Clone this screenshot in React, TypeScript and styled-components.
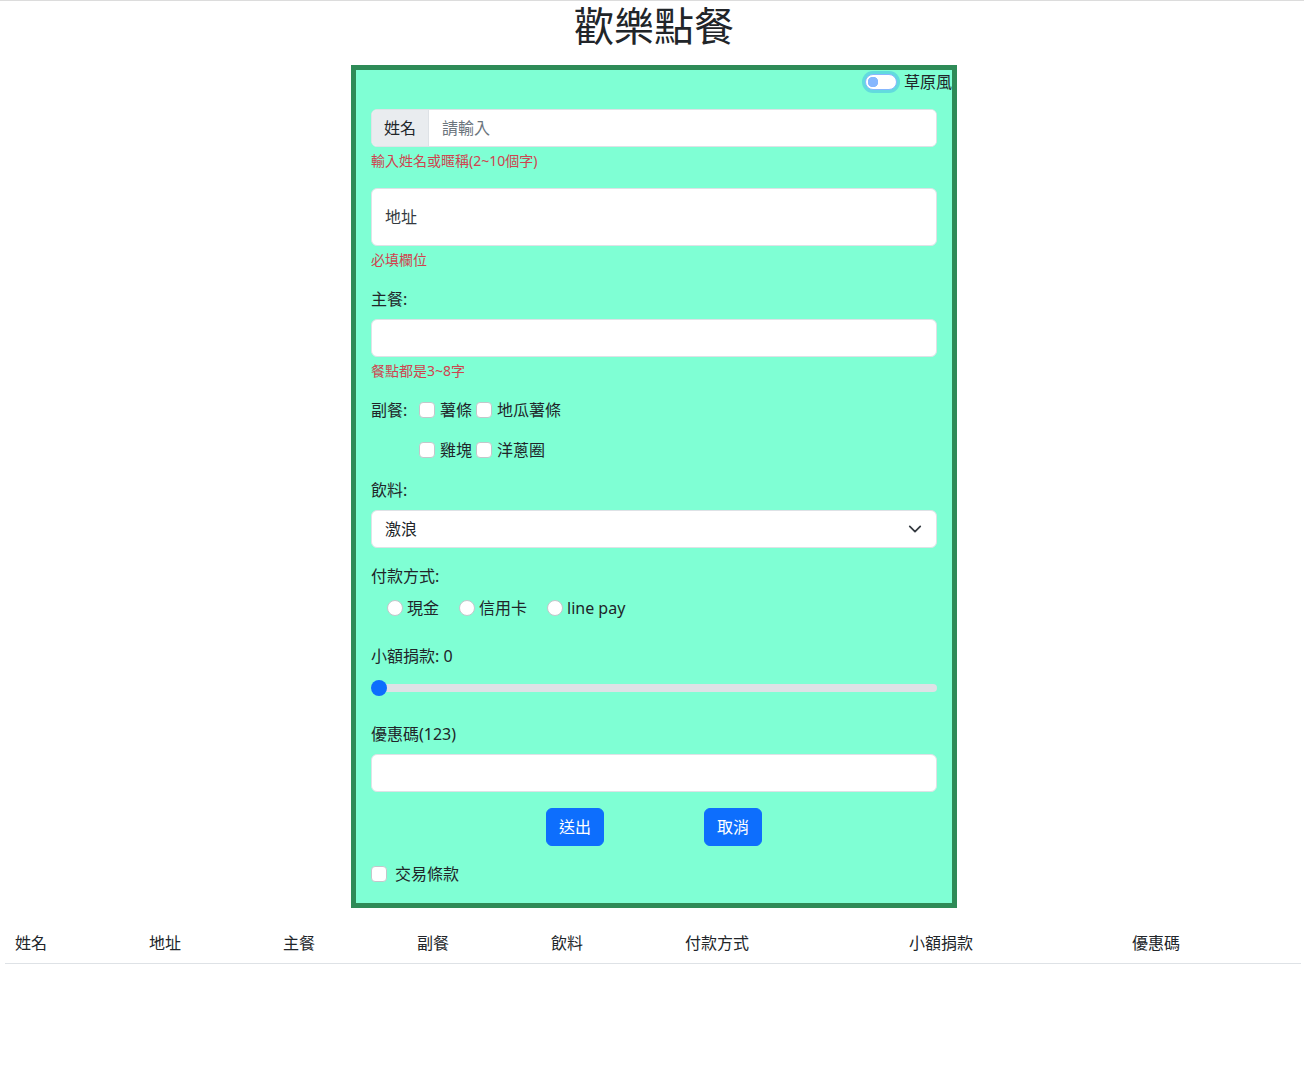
import React from "react";
import styled, { createGlobalStyle } from "styled-components";

const GlobalStyle = createGlobalStyle`
	body {
		margin: 0;
		background: #fff;
		color: #212529;
		font-family: "Noto Sans", "Noto Sans CJK TC", sans-serif;
		font-size: 16px;
		line-height: 24px;
	}
	* {
		box-sizing: border-box;
	}
`;

const sides = ["薯條", "地瓜薯條", "雞塊", "洋蔥圈"];
const payments = ["現金", "信用卡", "line pay"];
const columns = ["姓名", "地址", "主餐", "副餐", "飲料", "付款方式", "小額捐款", "優惠碼"];

const App = () => {
	return (
		<Page>
			<GlobalStyle />
			<TopRule />
			<Main>
				<Title>歡樂點餐</Title>
				<Form>
					<SwitchRow>
						<Switch type="checkbox" />
						<span>草原風</span>
					</SwitchRow>

					<InputGroup $mt={15}>
						<GroupText>姓名</GroupText>
						<GroupInput placeholder="請輸入" />
					</InputGroup>
					<Hint>輸入姓名或暱稱(2~10個字)</Hint>

					<Floating $mt={17}>
						<FloatingLabel>地址</FloatingLabel>
					</Floating>
					<Hint>必填欄位</Hint>

					<Label $mt={17}>主餐:</Label>
					<TextInput $mt={8} />
					<Hint>餐點都是3~8字</Hint>

					<SideBlock>
						<SideLabel>副餐:</SideLabel>
						<SideGrid>
							{sides.map((side) => (
								<CheckItem key={side}>
									<Check type="checkbox" />
									<span>{side}</span>
								</CheckItem>
							))}
						</SideGrid>
					</SideBlock>

					<Label $mt={16}>飲料:</Label>
					<Select>
						<span>激浪</span>
						<svg width="14" height="14" viewBox="0 0 16 16">
							<path
								d="M2 5l6 6 6-6"
								fill="none"
								stroke="#343a40"
								strokeWidth="2"
								strokeLinecap="round"
								strokeLinejoin="round"
							/>
						</svg>
					</Select>

					<Label $mt={16}>付款方式:</Label>
					<RadioRow>
						{payments.map((pay) => (
							<RadioItem key={pay}>
								<Radio type="radio" name="pay" />
								<span>{pay}</span>
							</RadioItem>
						))}
					</RadioRow>

					<Label $mt={24}>小額捐款: 0</Label>
					<Range type="range" min={0} max={100} defaultValue={0} />

					<Label $mt={26}>優惠碼(123)</Label>
					<TextInput $mt={8} />

					<Buttons>
						<Button>送出</Button>
						<Button>取消</Button>
					</Buttons>

					<Terms>
						<Check type="checkbox" />
						<span>交易條款</span>
					</Terms>
				</Form>
			</Main>

			<Table>
				{columns.map((col) => (
					<HeadCell key={col}>{col}</HeadCell>
				))}
			</Table>
		</Page>
	);
};

const Page = styled.div`
	min-height: 1076px;
`;
const TopRule = styled.div`
	height: 1px;
	background: #dcdcdc;
`;
const Main = styled.div`
	padding-left: 4px;
	display: flex;
	flex-direction: column;
	align-items: center;
`;
const Title = styled.h1`
	margin: 1px 0 15px;
	font-size: 40px;
	line-height: 48px;
	font-weight: 400;
	color: #212529;
`;
const Form = styled.div`
	width: 606px;
	background: #7fffd4;
	border: 5px solid #2e8b57;
	padding: 0 15px 17px;
	display: flex;
	flex-direction: column;
`;
const SwitchRow = styled.label`
	display: flex;
	align-items: center;
	justify-content: flex-end;
	gap: 7px;
	height: 24px;
	margin-right: -15px;
	color: #212529;
`;
const Switch = styled.input`
	appearance: none;
	margin: 0;
	width: 32px;
	height: 16px;
	border-radius: 8px;
	border: 1px solid #86b7fe;
	background: #fff radial-gradient(circle at 7px center, #86b7fe 5px, transparent 5.5px);
	box-shadow: 0 0 0 3px rgba(13, 110, 253, 0.25);
`;
const InputGroup = styled.div<{ $mt: number }>`
	display: flex;
	height: 38px;
	margin-top: ${(p) => p.$mt}px;
	border: 1px solid #dee2e6;
	border-radius: 6px;
	overflow: hidden;
	background: #fff;
`;
const GroupText = styled.span`
	display: flex;
	align-items: center;
	padding: 0 12px;
	background: #e9ecef;
	border-right: 1px solid #dee2e6;
	color: #212529;
`;
const GroupInput = styled.input`
	flex: 1;
	border: none;
	outline: none;
	padding: 0 13px;
	font: inherit;
	color: #212529;
	&::placeholder {
		color: #6c757d;
	}
`;
const Hint = styled.div`
	margin-top: 4px;
	font-size: 14px;
	line-height: 20px;
	color: #d0434f;
`;
const Floating = styled.div<{ $mt: number }>`
	height: 58px;
	margin-top: ${(p) => p.$mt}px;
	background: #fff;
	border: 1px solid #dee2e6;
	border-radius: 6px;
	display: flex;
	align-items: center;
	padding: 0 13px;
`;
const FloatingLabel = styled.span`
	color: #343a40;
`;
const Label = styled.div<{ $mt: number }>`
	margin-top: ${(p) => p.$mt}px;
	color: #212529;
`;
const TextInput = styled.input<{ $mt: number }>`
	height: 38px;
	margin-top: ${(p) => p.$mt}px;
	border: 1px solid #dee2e6;
	border-radius: 6px;
	background: #fff;
	padding: 0 12px;
	font: inherit;
	outline: none;
`;
const SideBlock = styled.div`
	display: flex;
	margin-top: 17px;
`;
const SideLabel = styled.span`
	width: 48px;
	flex-shrink: 0;
`;
const SideGrid = styled.div`
	display: flex;
	flex-wrap: wrap;
	row-gap: 16px;
	width: 160px;
`;
const CheckItem = styled.label`
	display: flex;
	align-items: center;
	gap: 5px;
	margin-right: 4px;
	height: 24px;
`;
const Check = styled.input`
	appearance: none;
	margin: 0;
	width: 16px;
	height: 16px;
	background: #fff;
	border: 1px solid #c3c7cb;
	border-radius: 4px;
`;
const Select = styled.div`
	height: 38px;
	margin-top: 8px;
	background: #fff;
	border: 1px solid #dee2e6;
	border-radius: 6px;
	display: flex;
	align-items: center;
	justify-content: space-between;
	padding: 0 14px 0 13px;
	color: #212529;
`;
const RadioRow = styled.div`
	display: flex;
	margin-top: 8px;
	padding-left: 16px;
	height: 24px;
`;
const RadioItem = styled.label`
	display: flex;
	align-items: center;
	gap: 4px;
	margin-right: 20px;
`;
const Radio = styled.input`
	appearance: none;
	margin: 0;
	width: 16px;
	height: 16px;
	background: #fff;
	border: 1px solid #c3c7cb;
	border-radius: 50%;
`;
const Range = styled.input`
	appearance: none;
	margin: 12px 0 0;
	width: 100%;
	height: 16px;
	background: transparent;
	&::-webkit-slider-runnable-track {
		height: 8px;
		border-radius: 4px;
		background: #dee2e6;
	}
	&::-webkit-slider-thumb {
		appearance: none;
		width: 16px;
		height: 16px;
		margin-top: -4px;
		border-radius: 50%;
		background: #0d6efd;
		border: none;
	}
`;
const Buttons = styled.div`
	display: flex;
	justify-content: center;
	gap: 100px;
	margin-top: 16px;
`;
const Button = styled.button`
	height: 38px;
	padding: 0 12px;
	border: 1px solid #0d6efd;
	border-radius: 6px;
	background: #0d6efd;
	color: #fff;
	font: inherit;
`;
const Terms = styled.label`
	display: flex;
	align-items: center;
	gap: 8px;
	margin-top: 16px;
	height: 24px;
`;
const Table = styled.div`
	display: grid;
	grid-template-columns: 134px 134px 134px 134px 134px 224px 223px 1fr;
	width: 1296px;
	margin: 15px 0 0 5px;
	border-bottom: 1px solid #dee2e6;
`;
const HeadCell = styled.div`
	padding: 8px 0 8px 10px;
	color: #212529;
`;

export default App;
